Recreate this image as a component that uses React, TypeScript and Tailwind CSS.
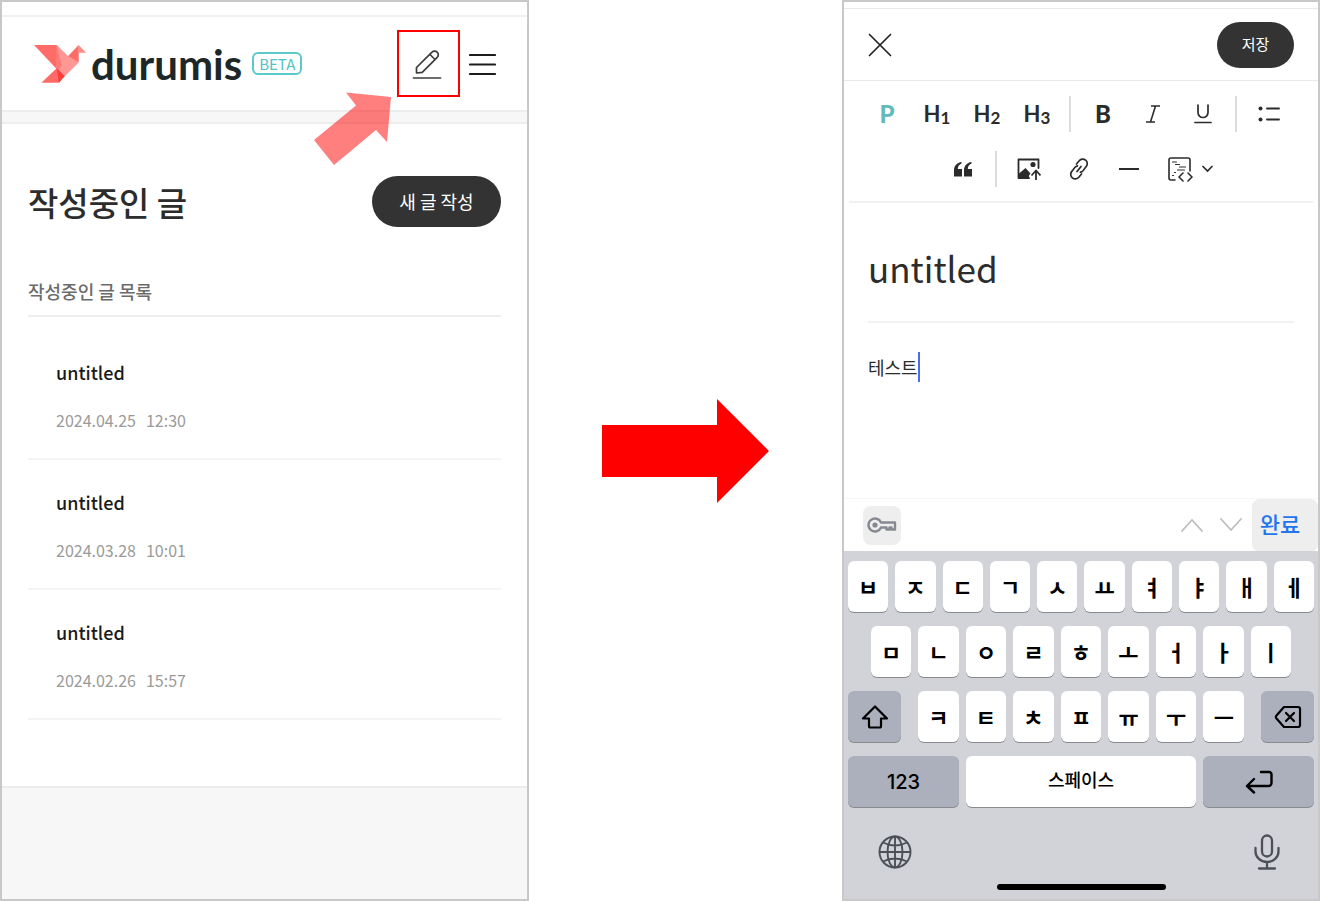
import { ReactNode } from 'react'

const drafts = [
    { title: 'untitled', date: '2024.04.25', time: '12:30' },
    { title: 'untitled', date: '2024.03.28', time: '10:01' },
    { title: 'untitled', date: '2024.02.26', time: '15:57' },
]

const rowOne = ['ㅂ', 'ㅈ', 'ㄷ', 'ㄱ', 'ㅅ', 'ㅛ', 'ㅕ', 'ㅑ', 'ㅐ', 'ㅔ']
const rowTwo = ['ㅁ', 'ㄴ', 'ㅇ', 'ㄹ', 'ㅎ', 'ㅗ', 'ㅓ', 'ㅏ', 'ㅣ']
const rowThree = ['ㅋ', 'ㅌ', 'ㅊ', 'ㅍ', 'ㅠ', 'ㅜ', 'ㅡ']

function Logo() {
    return (
        <svg width="52" height="38" viewBox="0 0 156 114">
            <path d="M0 0h68l24 92-24-20z" fill="#ff6b67" />
            <path d="M68 0l34 34 32 18-42 42-22-22z" fill="#ff9794" />
            <path d="M68 0l-2 68 8 8 10-14z" fill="#ff7b77" />
            <path d="M68 0l34 34 32 18-42 42z" fill="#ff9794" />
            <path d="M134 0v52l-32-18z" fill="#ff6b67" />
            <path d="M134 0l22 23h-22z" fill="#ff8a86" />
            <path d="M68 70L22 113h53l17-20z" fill="#ff6b67" />
            <path d="M68 70l24 23-17 20z" fill="#ff3d3b" />
        </svg>
    )
}

function PencilIcon() {
    return (
        <svg width="30" height="30" viewBox="0 0 30 30" fill="none" stroke="#3c3c3c" strokeWidth="1.7" strokeLinejoin="round" strokeLinecap="round">
            <path d="M4.5 24v-5.500L20 3.200a3.600 3.600 0 0 1 5.200 0a3.600 3.600 0 0 1 0 5.200L10.200 23.300z" />
            <path d="M18 5.500l5 5" />
            <path d="M1.500 29h27" />
        </svg>
    )
}

function ListPanel() {
    return (
        <section className="flex min-w-0 flex-col border-2 border-[#c8c8c8] bg-white">
            <div className="h-[13px]" />
            <header className="flex h-[95px] items-center border-t-2 border-[#f1f1f1] pl-8 pr-[31px]">
                <a href="#" className="flex items-center">
                    <Logo />
                    <span className="ml-[5px] font-['Lato'] text-[42px] leading-[44px] font-bold text-[#1e2727]">durumis</span>
                </a>
                <span className="ml-[10px] flex h-[23px] w-[50px] items-center justify-center rounded-md border-2 border-[#5cc9ca] text-[15px] leading-none text-[#4fc4c5]">BETA</span>
                <div className="relative ml-auto">
                    <button aria-label="글쓰기" className="flex h-[67px] w-[63px] items-center justify-center border-2 border-[#ff0000] pr-1">
                        <PencilIcon />
                    </button>
                    <svg className="absolute top-[62px] right-[68px]" width="78" height="74" viewBox="0 0 78 74">
                        <path d="M77 5L32 .5l10 13L0 48l20 25 42-35 11 12z" fill="#ff0000" fillOpacity=".5" />
                    </svg>
                </div>
                <button aria-label="메뉴" className="ml-[9px]">
                    <svg width="27" height="24" viewBox="0 0 27 24" stroke="#1c1c1c" strokeWidth="2.200" strokeLinecap="round">
                        <path d="M1 3h25M1 12.500h25M1 22h25" />
                    </svg>
                </button>
            </header>
            <div className="h-[14px] border-y-2 border-[#ededed] bg-[#f7f7f7]" />

            <main className="px-[26px]">
                <div className="mt-[52px] flex items-center justify-between">
                    <h1 className="text-[33px] leading-[48px] font-medium text-[#2c2c2c]">작성중인 글</h1>
                    <button className="h-[51px] w-[129px] rounded-full bg-[#333333] text-[18px] text-white">새 글 작성</button>
                </div>
                <h2 className="mt-[50px] border-b-2 border-[#eeeeee] pb-[10px] text-[18px] leading-7 font-medium text-[#6b6b6b]">작성중인 글 목록</h2>
                <ul className="pt-[13px]">
                    {drafts.map(draft => (
                        <li key={draft.date} className="h-[130px] border-b-2 border-[#f4f4f4] px-7 pt-[28px]">
                            <a href="#" className="text-[18px] leading-7 font-medium text-[#1a1a1a]">{draft.title}</a>
                            <p className="mt-[22px] flex gap-[10px] text-[16px] leading-6 text-[#9a9a9a]">
                                <span>{draft.date}</span>
                                <span>{draft.time}</span>
                            </p>
                        </li>
                    ))}
                </ul>
            </main>
            <footer className="mt-[66px] flex-1 border-t-2 border-[#ececec] bg-[#f7f7f7]" />
        </section>
    )
}

function Tool({ label, children }: { label: string; children: ReactNode }) {
    return (
        <button aria-label={label} className="flex h-9 w-[50px] items-center justify-center text-[#2b2b2b]">
            {children}
        </button>
    )
}

function Heading({ level }: { level: number }) {
    return (
        <Tool label={`H${level}`}>
            <span className="font-['Lato'] text-[22px] leading-6 font-bold">H</span>
            <span className="pt-[7px] font-['Lato'] text-[17px] leading-5 font-bold">{level}</span>
        </Tool>
    )
}

const Divider = () => <div className="mx-[7px] h-9 w-[2px] bg-[#dcdcdc]" />

function Toolbar() {
    return (
        <div className="mx-[5px] flex h-[122px] flex-col gap-[19px] border-b-2 border-[#f1f1f1] pt-[15px] pr-[6px]">
            <div className="flex justify-center">
                <Tool label="P"><span className="font-['Lato'] text-[24px] leading-6 font-black text-[#62babc]">P</span></Tool>
                <Heading level={1} />
                <Heading level={2} />
                <Heading level={3} />
                <Divider />
                <Tool label="B"><span className="font-['Lato'] text-[24px] leading-6 font-black">B</span></Tool>
                <Tool label="I">
                    <svg width="14" height="18" viewBox="0 0 14 18" fill="none" stroke="currentColor" strokeWidth="1.600">
                        <path d="M5 1h9M0 17h9M9.500 1l-5 16" />
                    </svg>
                </Tool>
                <Tool label="U">
                    <svg width="18" height="20" viewBox="0 0 18 20" fill="none" stroke="currentColor" strokeWidth="1.700">
                        <path d="M4 1v7.500a5 5 0 0 0 10 0V1M1 18.500h16" strokeLinecap="round" />
                    </svg>
                </Tool>
                <Divider />
                <Tool label="목록">
                    <svg width="22" height="16" viewBox="0 0 22 16" fill="none" stroke="currentColor" strokeWidth="1.900" strokeLinecap="round">
                        <path d="M9 2.500h12M9 13.500h12" />
                        <circle cx="2.500" cy="2.500" r="2" fill="currentColor" stroke="none" />
                        <circle cx="2.500" cy="13.500" r="2" fill="currentColor" stroke="none" />
                    </svg>
                </Tool>
            </div>
            <div className="flex justify-center">
                <Tool label="인용">
                    <svg width="18" height="15" viewBox="0 0 18 15" fill="currentColor">
                        <path d="M0 14.500V8C0 4 3 .5 7.500 0v1.500C5 2.500 3.800 4.500 3.800 7H8v7.500zM10 14.500V8C10 4 13 .5 17.500 0v1.500C15 2.500 13.800 4.500 13.800 7H18v7.500z" />
                    </svg>
                </Tool>
                <Divider />
                <Tool label="이미지">
                    <svg width="25" height="24" viewBox="0 0 25 24" fill="none" stroke="currentColor" strokeWidth="1.800">
                        <path d="M13 21H2.500V2.500h20V11" strokeLinejoin="round" strokeLinecap="round" />
                        <circle cx="17" cy="7.500" r="2.600" fill="currentColor" stroke="none" />
                        <path d="M2.500 17l7-6 5 5.500-1.500 2v2.500H2.500z" fill="currentColor" stroke="none" />
                        <path d="M20 23V14M15.500 18.500l4.500-5 4.500 5" />
                    </svg>
                </Tool>
                <Tool label="링크">
                    <svg width="20" height="22" viewBox="0 0 20 22" fill="none" stroke="currentColor" strokeWidth="1.700" strokeLinecap="round">
                        <path d="M7.500 6l2.700-3.200a4.500 4.500 0 0 1 6.400-.6a4.500 4.500 0 0 1 .6 6.400L14 12.700a4.500 4.500 0 0 1-2.500 1.500" />
                        <path d="M12.500 16l-2.700 3.200a4.500 4.500 0 0 1-6.400.6a4.500 4.500 0 0 1-.6-6.400L6 9.300a4.500 4.500 0 0 1 2.500-1.500" />
                        <path d="M8 13.500l4-5" />
                    </svg>
                </Tool>
                <Tool label="구분선"><span className="h-[2px] w-5 bg-[#2b2b2b]" /></Tool>
                <button aria-label="코드" className="flex h-9 w-[65px] items-center gap-[9px] pl-[14px] text-[#2b2b2b]">
                    <svg width="25" height="25" viewBox="0 0 25 25" fill="none" stroke="currentColor" strokeWidth="1.600" strokeLinecap="round" strokeLinejoin="round">
                        <path d="M7 23H3a2 2 0 0 1-2-2V3a2 2 0 0 1 2-2h17a2 2 0 0 1 2 2v11" />
                        <path d="M4.500 5h4M7.500 7.500h4M11.500 10h6M9.500 13h7M6.500 15.500h1M4.500 18.500h1M11.500 13h5" strokeWidth="1.200" />
                        <path d="M15 16l-4 4 4 4M20 16l4 4-4 4" />
                    </svg>
                    <svg width="11" height="8" viewBox="0 0 11 8" fill="none" stroke="currentColor" strokeWidth="1.700" strokeLinecap="round">
                        <path d="M1 1.500l4.500 4.500L10 1.500" />
                    </svg>
                </button>
            </div>
        </div>
    )
}

const keyBase = 'flex h-[51px] items-center justify-center rounded-md text-black shadow-[0_1px_0_#898a8d]'

function LetterKey({ letter }: { letter: string }) {
    return <button className={`${keyBase} min-w-0 flex-1 bg-white text-[22px] font-bold`}>{letter}</button>
}

function Keyboard() {
    return (
        <div className="flex flex-col gap-[14px] bg-[#d2d3d9] px-1 pt-[10px] pb-[9px]">
            <div className="flex gap-[7px]">
                {rowOne.map(letter => <LetterKey key={letter} letter={letter} />)}
            </div>
            <div className="flex gap-[7px] px-[23px]">
                {rowTwo.map(letter => <LetterKey key={letter} letter={letter} />)}
            </div>
            <div className="flex gap-[17px]">
                <button aria-label="Shift" className={`${keyBase} w-[53px] bg-[#abb0bc]`}>
                    <svg width="28" height="24" viewBox="0 0 28 24" fill="none" stroke="currentColor" strokeWidth="2.200" strokeLinejoin="round">
                        <path d="M14 1.500L2 13.500h6V21a1.500 1.500 0 0 0 1.500 1.500h9A1.500 1.500 0 0 0 20 21v-7.500h6z" />
                    </svg>
                </button>
                <div className="flex flex-1 gap-[7px]">
                    {rowThree.map(letter => <LetterKey key={letter} letter={letter} />)}
                </div>
                <button aria-label="삭제" className={`${keyBase} w-[53px] bg-[#abb0bc]`}>
                    <svg width="28" height="24" viewBox="0 0 28 24" fill="none" stroke="currentColor" strokeWidth="2.200" strokeLinejoin="round" strokeLinecap="round">
                        <path d="M10 2h14a2 2 0 0 1 2 2v16a2 2 0 0 1-2 2H10L2.500 13.500a2 2 0 0 1 0-3z" />
                        <path d="M12 8l8 8M20 8l-8 8" />
                    </svg>
                </button>
            </div>
            <div className="flex gap-[7px]">
                <button className={`${keyBase} w-[111px] bg-[#abb0bc] font-['Inter'] text-[20px] font-medium`}>123</button>
                <button className={`${keyBase} flex-1 bg-white pb-1 text-[18px] font-medium`}>스페이스</button>
                <button aria-label="Enter" className={`${keyBase} w-[111px] bg-[#abb0bc]`}>
                    <svg width="28" height="24" viewBox="0 0 28 24" fill="none" stroke="currentColor" strokeWidth="2.400" strokeLinejoin="round" strokeLinecap="round">
                        <path d="M16 2h8a2.500 2.500 0 0 1 2.500 2.500V13a3 3 0 0 1-3 3H2.500M9 9l-7 7 7 6.500" />
                    </svg>
                </button>
            </div>
            <div className="flex items-center justify-between px-[30px] pt-[13px]">
                <button aria-label="언어">
                    <svg width="34" height="34" viewBox="0 0 34 34" fill="none" stroke="#4d5157" strokeWidth="1.900">
                        <circle cx="17" cy="17" r="15.500" />
                        <ellipse cx="17" cy="17" rx="7.500" ry="15.500" />
                        <path d="M17 1.500v31M1.500 17h31M5 7.500q12 6 24 0M5 26.500q12-6 24 0" />
                    </svg>
                </button>
                <button aria-label="음성 입력" className="mr-1">
                    <svg width="26" height="36" viewBox="0 0 26 36" fill="none" stroke="#4d5157" strokeWidth="2.300" strokeLinecap="round">
                        <rect x="8" y="1.500" width="10" height="21" rx="5" />
                        <path d="M1.500 14v3.500a11.500 10.500 0 0 0 23 0V14M13 28v6M5 34.500h16" />
                    </svg>
                </button>
            </div>
            <div className="mx-auto h-[6px] w-[169px] rounded-full bg-black" />
        </div>
    )
}

function EditorPanel() {
    return (
        <section className="flex min-w-0 flex-col border-2 border-[#c8c8c8] bg-white">
            <div className="h-[6px]" />
            <header className="flex h-[73px] items-center justify-between border-y border-[#e9e9e9] px-6">
                <button aria-label="닫기">
                    <svg width="24" height="24" viewBox="0 0 24 24" stroke="#222222" strokeWidth="1.700" strokeLinecap="round">
                        <path d="M1.500 1.500l21 21M22.500 1.500l-21 21" />
                    </svg>
                </button>
                <button className="h-[46px] w-[77px] rounded-full bg-[#333333] text-[15px] text-white">저장</button>
            </header>
            <Toolbar />
            <main className="flex-1 px-6">
                <input aria-label="제목" defaultValue="untitled" className="mt-[36px] block h-[56px] w-full text-[35px] text-[#2c2c2c] outline-none" />
                <div className="mt-[26px] border-t-2 border-[#f2f2f2]" />
                <div className="mt-[29px] flex h-[30px] items-center">
                    <input aria-label="본문" defaultValue="테스트" className="field-sizing-content h-[30px] text-[18px] text-[#2c2c2c] outline-none" />
                    <span className="h-[30px] w-[2px] bg-[#4a6cf0]" />
                </div>
            </main>
            <div className="flex h-[53px] items-center border-t border-[#f7f7f7] pl-[19px]">
                <button aria-label="비밀번호" className="flex h-[39px] w-[38px] items-center justify-center rounded-lg bg-[#eeeeee]">
                    <svg width="30" height="16" viewBox="0 0 30 16" fill="none" stroke="#868a90" strokeWidth="2.400" strokeLinejoin="round">
                        <path d="M14 5.500h14v7h-3.500v-2h-2v2h-3v-2H14A6.500 6.500 0 1 1 14 5.500z" />
                        <circle cx="8" cy="8" r="2.600" fill="#868a90" stroke="none" />
                    </svg>
                </button>
                <button aria-label="이전" className="ml-auto">
                    <svg width="22" height="14" viewBox="0 0 22 14" fill="none" stroke="#bdbdbf" strokeWidth="1.800" strokeLinecap="round">
                        <path d="M1 13L11 2l10 11" />
                    </svg>
                </button>
                <button aria-label="다음" className="ml-[17px]">
                    <svg width="22" height="14" viewBox="0 0 22 14" fill="none" stroke="#bdbdbf" strokeWidth="1.800" strokeLinecap="round">
                        <path d="M1 1l10 11L21 1" />
                    </svg>
                </button>
                <button className="ml-[10px] h-[53px] w-[66px] rounded-lg bg-[#eeeeee] pr-[10px] pb-1 text-[22px] font-medium text-[#2176ee]">완료</button>
            </div>
            <Keyboard />
        </section>
    )
}

export default function App() {
    return (
        <div className="grid min-h-screen grid-cols-[529fr_313fr_478fr] bg-white font-['Noto_Sans_CJK_KR',sans-serif]">
            <ListPanel />
            <div className="flex items-center justify-center">
                <svg width="167" height="104" viewBox="0 0 167 104">
                    <path d="M0 26h115V0l52 52-52 52V78H0z" fill="#ff0000" />
                </svg>
            </div>
            <EditorPanel />
        </div>
    )
}
